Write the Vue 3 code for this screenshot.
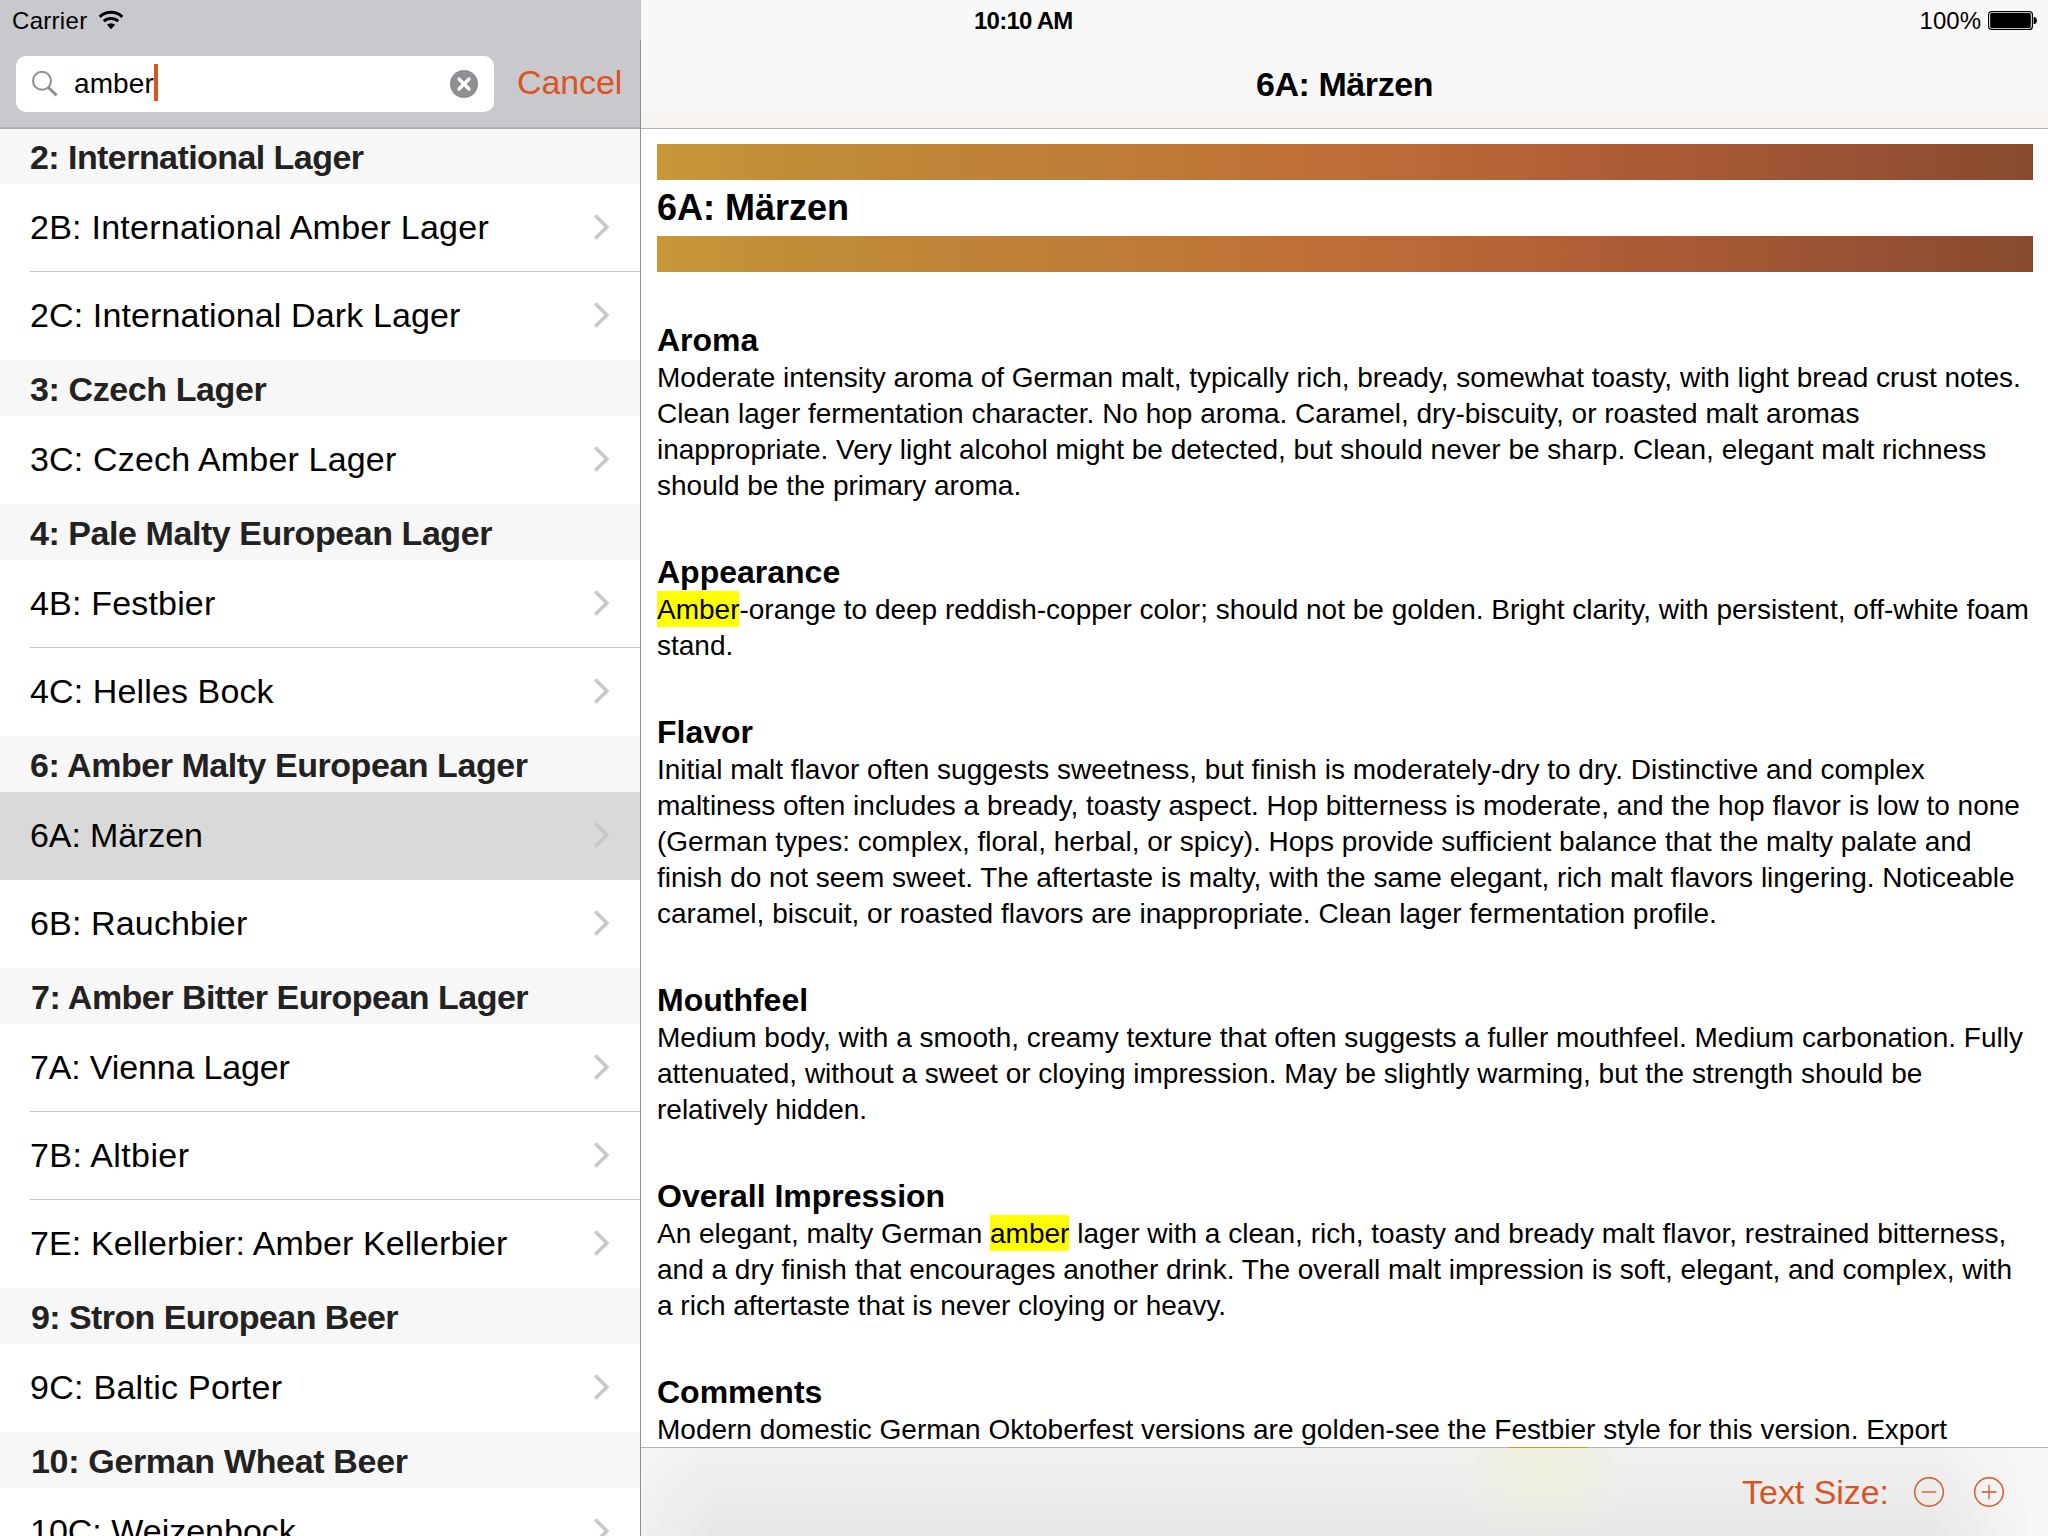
<script setup>
const query = 'amber'

// `track` fine-tunes the letter spacing (px) of each label
const groups = [
  { title: '2: International Lager', track: -0.56, rows: [
    { name: '2B: International Amber Lager', track: 0.25 },
    { name: '2C: International Dark Lager', track: 0.12 }
  ] },
  { title: '3: Czech Lager', track: -0.4, rows: [
    { name: '3C: Czech Amber Lager', track: 0.17 }
  ] },
  { title: '4: Pale Malty European Lager', track: -0.44, rows: [
    { name: '4B: Festbier', track: 0.18 },
    { name: '4C: Helles Bock', track: 0.12 }
  ] },
  { title: '6: Amber Malty European Lager', track: -0.46, rows: [
    { name: '6A: Märzen', track: -0.1, selected: true },
    { name: '6B: Rauchbier', track: 0.15 }
  ] },
  { title: '7: Amber Bitter European Lager', track: -0.52, shift: true, rows: [
    { name: '7A: Vienna Lager', track: -0.16 },
    { name: '7B: Altbier', track: 0.4 },
    { name: '7E: Kellerbier: Amber Kellerbier', track: 0.1 }
  ] },
  { title: '9: Stron European Beer', track: -0.58, shift: true, rows: [
    { name: '9C: Baltic Porter', track: 0.28 }
  ] },
  { title: '10: German Wheat Beer', track: -0.33, shift: true, rows: [
    { name: '10C: Weizenbock', track: 0 }
  ] }
]

const sections = [
  { title: 'Aroma', text: 'Moderate intensity aroma of German malt, typically rich, bready, somewhat toasty, with light bread crust notes. Clean lager fermentation character. No hop aroma. Caramel, dry-biscuity, or roasted malt aromas inappropriate. Very light alcohol might be detected, but should never be sharp. Clean, elegant malt richness should be the primary aroma.' },
  { title: 'Appearance', text: 'Amber-orange to deep reddish-copper color; should not be golden. Bright clarity, with persistent, off-white foam stand.' },
  { title: 'Flavor', text: 'Initial malt flavor often suggests sweetness, but finish is moderately-dry to dry. Distinctive and complex maltiness often includes a bready, toasty aspect. Hop bitterness is moderate, and the hop flavor is low to none (German types: complex, floral, herbal, or spicy). Hops provide sufficient balance that the malty palate and finish do not seem sweet. The aftertaste is malty, with the same elegant, rich malt flavors lingering. Noticeable caramel, biscuit, or roasted flavors are inappropriate. Clean lager fermentation profile.' },
  { title: 'Mouthfeel', text: 'Medium body, with a smooth, creamy texture that often suggests a fuller mouthfeel. Medium carbonation. Fully attenuated, without a sweet or cloying impression. May be slightly warming, but the strength should be relatively hidden.' },
  { title: 'Overall Impression', text: 'An elegant, malty German amber lager with a clean, rich, toasty and bready malt flavor, restrained bitterness, and a dry finish that encourages another drink. The overall malt impression is soft, elegant, and complex, with a rich aftertaste that is never cloying or heavy.' },
  { title: 'Comments', text: 'Modern domestic German Oktoberfest versions are golden-see the Festbier style for this version. Export' }
]

const split = (text) => text.split(new RegExp(`(${query})`, 'i'))
const isHit = (part) => part.toLowerCase() === query
</script>

<template>
  <div class="screen">
    <aside class="sidebar">
      <header class="side-top">
        <div class="status side-status">
          <span class="carrier">Carrier</span>
          <svg class="wifi" width="26" height="20" viewBox="0 0 26 20">
            <g fill="none" stroke="#000" stroke-width="3">
              <path d="M1.7 6.8A16.6 16.6 0 0 1 24.3 6.8" />
              <path d="M5.8 11.2A10.6 10.6 0 0 1 20.2 11.2" />
            </g>
            <path d="M13 19.2L8.9 14.8A6 6 0 0 1 17.1 14.8Z" />
          </svg>
        </div>
        <div class="search">
          <div class="field">
            <svg class="lens" width="28" height="28" viewBox="0 0 28 28" fill="none" stroke="#8e8e93">
              <circle cx="12" cy="10.8" r="9" stroke-width="2" />
              <path d="M18.2 17.2L26.6 25.4" stroke-width="3" />
            </svg>
            <span class="query">{{ query }}</span>
            <span class="caret"></span>
            <svg class="clear" width="28" height="28" viewBox="0 0 28 28">
              <circle cx="14" cy="14" r="14" fill="#8e8e93" />
              <path d="M9 9L19 19M19 9L9 19" stroke="#fff" stroke-width="3.2" stroke-linecap="round" />
            </svg>
          </div>
          <span class="cancel">Cancel</span>
        </div>
      </header>
      <section v-for="g in groups" :key="g.title">
        <h2 class="group" :class="{ shift: g.shift }" :style="{ letterSpacing: g.track + 'px' }">{{ g.title }}</h2>
        <div v-for="r in g.rows" :key="r.name" class="row" :class="{ selected: r.selected }">
          <span class="name" :style="{ letterSpacing: r.track + 'px' }">{{ r.name }}</span>
          <svg class="chevron" width="18" height="26" viewBox="0 0 18 26" fill="none" stroke="#c7c7cc" stroke-width="3.6">
            <path d="M2.3 1.5L13.8 13L2.3 24.5" />
          </svg>
        </div>
      </section>
    </aside>

    <div class="divider"></div>

    <main class="detail">
      <header class="nav">
        <div class="status main-status">
          <span class="clock">10:10 AM</span>
          <span class="percent">100%</span>
          <svg class="battery" width="50" height="20" viewBox="0 0 50 20">
            <rect x="0.6" y="0.6" width="43.8" height="17.8" rx="3" fill="#fff" stroke="#000" stroke-width="1.2" />
            <rect x="2.2" y="2" width="40.6" height="15" rx="1.5" />
            <path d="M45.6 6H47Q49 7.5 49 9.5T47 13H45.6Z" />
          </svg>
        </div>
        <h1 class="nav-title">6A: Märzen</h1>
      </header>

      <article class="content">
        <div class="bar"></div>
        <h1 class="style-name">6A: Märzen</h1>
        <div class="bar last"></div>
        <section v-for="s in sections" :key="s.title" class="entry">
          <h3>{{ s.title }}</h3>
          <p><template v-for="(part, i) in split(s.text)" :key="i"><mark v-if="isHit(part)">{{ part }}</mark><template v-else>{{ part }}</template></template></p>
        </section>
      </article>

      <footer class="toolbar">
        <span class="size-label">Text Size:</span>
        <svg class="minus" width="32" height="32" viewBox="0 0 32 32" fill="none" stroke="#d9541e">
          <circle cx="16" cy="16" r="14.3" stroke-width="1.4" />
          <path d="M8.7 16H23.3" stroke-width="1.3" />
        </svg>
        <svg width="32" height="32" viewBox="0 0 32 32" fill="none" stroke="#d9541e">
          <circle cx="16" cy="16" r="14.3" stroke-width="1.4" />
          <path d="M8.7 16H23.3M16 8.7V23.3" stroke-width="1.3" />
        </svg>
      </footer>
    </main>
  </div>
</template>

<style>
html, body { margin: 0; overflow: hidden; }
</style>

<style scoped>
* { box-sizing: border-box; }
h1, h2, h3, p { margin: 0; }
.screen {
  display: flex;
  width: 2048px;
  height: 1536px;
  overflow: hidden;
  background: #fff;
  color: #000;
  font-family: "Liberation Sans", Arial, sans-serif;
}

.sidebar { flex: none; width: 640px; height: 1536px; overflow: hidden; }
.side-top {
  height: 128px;
  background: #c9c8cd;
  border-bottom: 1px solid #b4b4b8;
}
.status {
  display: flex;
  align-items: center;
  height: 40px;
  padding-top: 2px;
  font-size: 24px;
}
.side-status { padding-left: 12px; }
.carrier { letter-spacing: 0.3px; width: 85.5px; }
.wifi { flex: none; margin-top: -3px; }
.search { display: flex; align-items: center; padding: 16px 0 0 16px; }
.field {
  display: flex;
  align-items: center;
  width: 478px;
  height: 56px;
  padding: 0 16px 0 14px;
  background: #fff;
  border-radius: 10px;
}
.lens { flex: none; margin-top: -1px; }
.query { margin-left: 16px; width: 80px; font-size: 28px; line-height: 56px; letter-spacing: 0.1px; }
.caret { flex: none; width: 4px; height: 37px; margin-top: -3px; background: #d9541e; }
.clear { flex: none; margin-left: auto; }
.cancel { margin: -4px 0 0 23px; font-size: 34px; letter-spacing: -0.1px; color: #d9541e; }

.group {
  height: 56px;
  padding: 1px 0 0 30px;
  background: #f7f7f7;
  color: #222;
  font-size: 34px;
  line-height: 56px;
  font-weight: 700;
  white-space: nowrap;
}
.group.shift { padding-left: 31px; }
section:first-of-type .group { box-shadow: inset 0 1px 0 #a9a9ab; }
.row {
  display: flex;
  align-items: center;
  justify-content: space-between;
  height: 88px;
  padding: 0 29px 0 30px;
  font-size: 34px;
  white-space: nowrap;
  background: linear-gradient(#c8c7cc, #c8c7cc) no-repeat 30px 87px / 610px 1px;
}
.row:last-child { background: #fff; }
.row.selected { background: #d9d9d9; }
.name { line-height: 86px; margin-bottom: 2px; }
.chevron { flex: none; margin-top: -2px; }

.divider { flex: none; width: 1px; height: 1536px; background: linear-gradient(#c4c4c6 40px, #8e8e93 40px); }

.detail { flex: 1; display: flex; flex-direction: column; min-width: 0; height: 1536px; }
.nav {
  flex: none;
  height: 129px;
  background: linear-gradient(#f8f8f8 0, #f8f8f8 70px, #f7f6f4 105px, #f7f4f1 128px);
  border-bottom: 1px solid #b2b2b2;
}
.main-status { padding-left: 333px; padding-right: 10px; }
.clock { font-weight: 700; letter-spacing: -0.75px; }
.percent { margin-left: auto; }
.battery { flex: none; margin: -1px 0 0 7px; }
.nav-title {
  font-size: 34px;
  line-height: 88px;
  font-weight: 700;
  letter-spacing: -0.42px;
  text-align: center;
}

.content { height: 1318px; overflow: hidden; padding: 15px 15px 0 16px; }
.bar {
  height: 36px;
  background: linear-gradient(90deg, #c79738 0%, #c08b38 12%, #bf7b37 34%, #bf6e37 50%, #b76437 60%, #a65835 77%, #884a2f 100%);
}
.bar.last { margin-bottom: 49px; }
.style-name { font-size: 36px; line-height: 56px; font-weight: 700; }
.entry { margin-bottom: 49px; }
.entry h3 { font-size: 32px; line-height: 38px; font-weight: 700; }
.entry p { padding-top: 1px; font-size: 28px; line-height: 36px; }
mark { padding: 3px 0 2px; background: #ff0; color: #000; }

.toolbar {
  flex: none;
  position: relative;
  display: flex;
  align-items: center;
  justify-content: flex-end;
  height: 89px;
  padding-right: 43px;
  border-top: 1px solid #b2b2b2;
  background:
    radial-gradient(ellipse 90px 80px at 903px 16px, rgba(240, 240, 212, 0.7), rgba(240, 240, 212, 0) 100%),
    linear-gradient(90deg, rgba(247, 247, 247, 0.6) 0, rgba(247, 247, 247, 0) 70px, rgba(247, 247, 247, 0) 1290px, #f8f8f8 1400px),
    linear-gradient(#f1f1f1, #e7e7e7);
}
.toolbar::before {
  content: "";
  position: absolute;
  top: -1px;
  left: 867px;
  width: 80px;
  height: 1px;
  background: #b2b200;
}
.size-label { font-size: 34px; letter-spacing: -0.05px; color: #d9541e; }
.minus { margin: 0 28px 0 24px; }
</style>
